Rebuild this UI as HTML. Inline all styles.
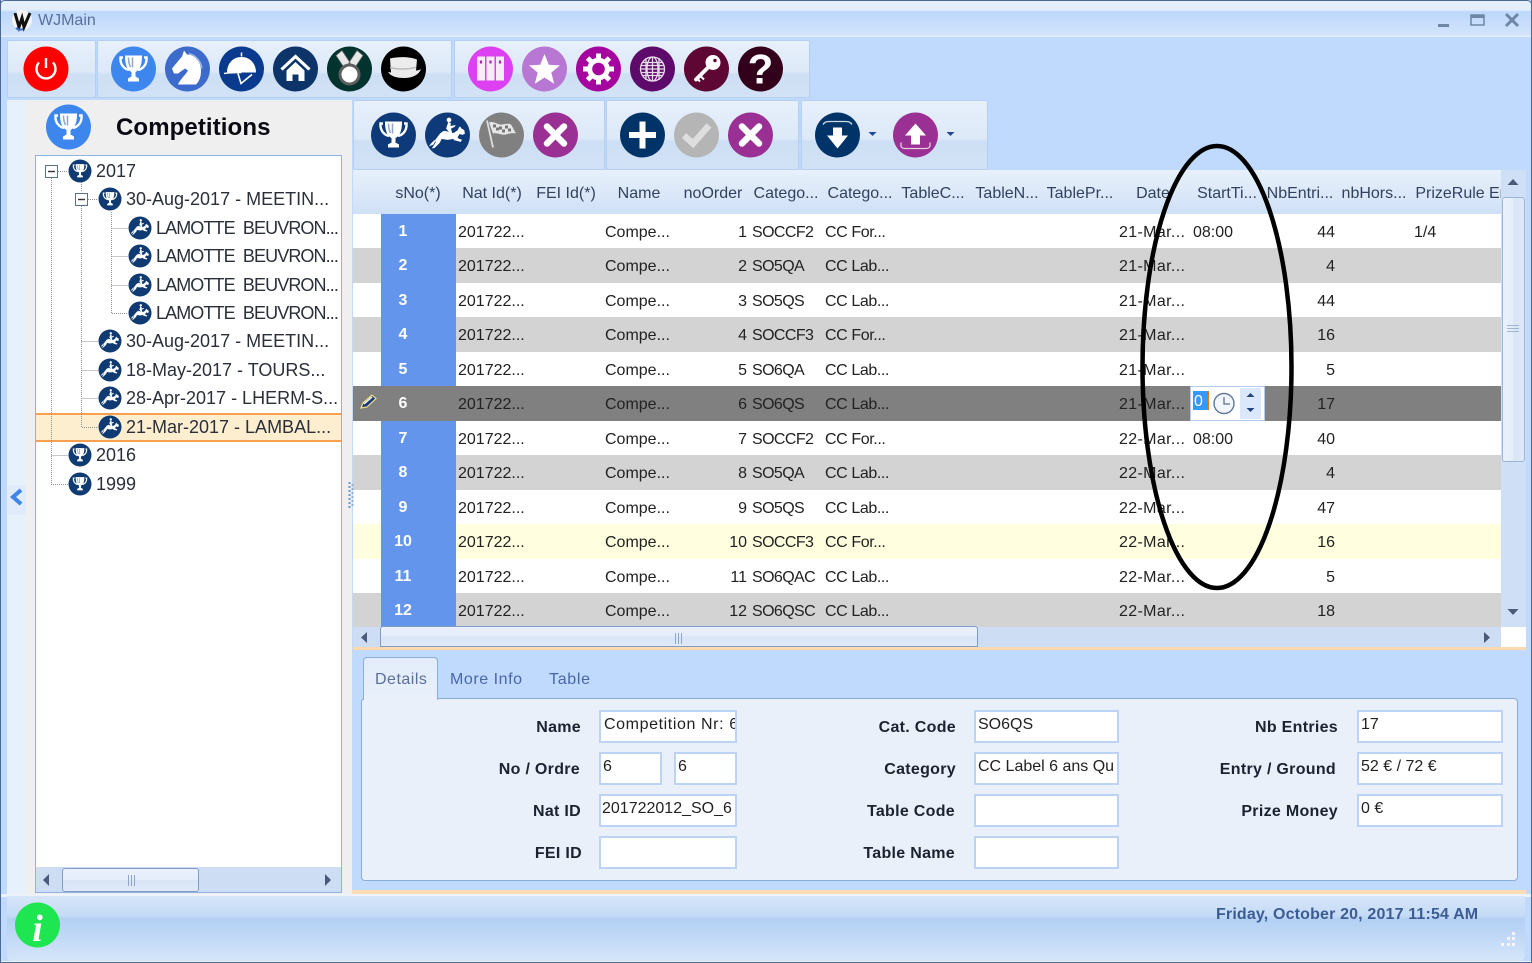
<!DOCTYPE html>
<html><head><meta charset="utf-8"><title>WJMain</title>
<style>
html,body{margin:0;padding:0;width:1532px;height:963px;overflow:hidden;background:#bfdafd}
*{box-sizing:border-box}
body{font-family:"Liberation Sans",sans-serif;color:#222;position:relative}
.a{position:absolute}
.grp{position:absolute;background:linear-gradient(#e7f0fb 0,#dde9f8 55%,#cddff4 60%,#d2e2f6 100%);border:1px solid #b4cff2;border-radius:2px}
.hd span{position:absolute;top:172px;height:44px;line-height:44px;font-size:16px;color:#33415f;text-align:center;white-space:nowrap;transform:translateX(-50%)}
.r{position:absolute;left:353px;width:1148px;font-size:16px;line-height:34px;white-space:nowrap;overflow:hidden}
.r span{position:absolute;top:2px}
.w{background:#fff}.g{background:#d3d3d3}.s{background:#808080}.y{background:#ffffe0}
.r .n{top:0;left:28px;width:75px;height:100%;background:#6495ed;color:#fff;font-weight:bold;padding-top:1px}
.r .n em{font-style:normal;display:block;width:44px;text-align:center}
.c1{left:105px}.c2{left:252px}.c3{left:344px;width:50px;text-align:right}.c4{left:399px;letter-spacing:-.6px}.c5{left:472px;letter-spacing:-.4px}.c6{left:766px;letter-spacing:.35px}.c7{left:840px}.c8{left:932px;width:50px;text-align:right}.c9{left:1061px}
.t{position:absolute;font-size:18px;line-height:28px;height:28px;white-space:pre;color:#2a2f3a}
.m{letter-spacing:-.9px}
.l{position:absolute;font-weight:bold;font-size:16px;line-height:24px;text-align:right;white-space:nowrap;color:#1b2230;width:200px;letter-spacing:.3px}
.f{position:absolute;background:#fff;border:2px solid #bcd3f4;font-size:16px;line-height:26px;padding-left:3px;height:33px;white-space:nowrap;overflow:hidden;color:#222}
.th{position:absolute;border:1px solid #7f9dc8;border-radius:3px;background:linear-gradient(#e9f1fc 0,#e4edfa 50%,#d8e5f6 51%,#dfe9f8 100%)}
</style></head>
<body>
<!-- window frame -->
<div class="a" style="left:0;top:0;width:1532px;height:963px;border:1px solid #4a6a94;border-radius:5px 5px 0 0;background:#bfdafd"></div>
<div class="a" style="left:1px;top:1px;width:1530px;height:36px;background:linear-gradient(#e6f0fc 0,#e2eefc 25%,#bdd8fc 30%,#d2e4fb 95%,#eef5fe 100%);border-radius:4px 4px 0 0"></div>
<div class="a" style="left:38px;top:11px;font-size:16px;line-height:20px;color:#5b6f9c">WJMain</div>

<!-- ribbon groups -->
<div class="grp" style="left:7px;top:40px;width:89px;height:58px"></div>
<div class="grp" style="left:97px;top:40px;width:355px;height:58px"></div>
<div class="grp" style="left:454px;top:40px;width:356px;height:58px"></div>

<!-- left panel -->
<div class="a" style="left:7px;top:100px;width:19px;height:795px;background:#e7f1fc"></div>
<div class="a" style="left:7px;top:485px;width:19px;height:30px;background:#e0ecfb"></div>
<div class="a" style="left:26px;top:100px;width:326px;height:795px;background:#efefef"></div>
<div class="a" style="left:116px;top:113px;font-size:24px;line-height:30px;font-weight:bold;color:#0a0a12;letter-spacing:.1px">Competitions</div>
<div class="a" style="left:35px;top:155px;width:307px;height:738px;background:#fff;border:1px solid #8fb2e2"></div>
<div class="a" style="left:36px;top:413px;width:305px;height:29px;background:#fdeed0;border-top:2px solid #f8a050;border-bottom:2px solid #f8a050"></div>
<div class="t" style="left:96px;top:157px">2017</div>
<div class="t" style="left:126px;top:185px">30-Aug-2017 - MEETIN...</div>
<div class="t m" style="left:156px;top:214px">LAMOTTE  BEUVRON...</div>
<div class="t m" style="left:156px;top:242px">LAMOTTE  BEUVRON...</div>
<div class="t m" style="left:156px;top:271px">LAMOTTE  BEUVRON...</div>
<div class="t m" style="left:156px;top:299px">LAMOTTE  BEUVRON...</div>
<div class="t" style="left:126px;top:327px">30-Aug-2017 - MEETIN...</div>
<div class="t" style="left:126px;top:356px">18-May-2017 - TOURS...</div>
<div class="t" style="left:126px;top:384px">28-Apr-2017 - LHERM-S...</div>
<div class="t" style="left:126px;top:413px">21-Mar-2017 - LAMBAL...</div>
<div class="t" style="left:96px;top:441px">2016</div>
<div class="t" style="left:96px;top:470px">1999</div>
<div class="a" style="left:36px;top:867px;width:305px;height:25px;background:#cddef4"></div>
<div class="th" style="left:62px;top:868px;width:137px;height:24px"></div>

<!-- right toolbars -->
<div class="grp" style="left:353px;top:100px;width:252px;height:70px"></div>
<div class="grp" style="left:606px;top:100px;width:193px;height:70px"></div>
<div class="grp" style="left:801px;top:100px;width:187px;height:70px"></div>

<!-- grid header -->
<div class="a" style="left:353px;top:170px;width:1148px;height:44px;background:linear-gradient(#e8f1fc,#cfe0f6)"></div>
<div class="hd">
<span style="left:418px">sNo(*)</span><span style="left:492px">Nat Id(*)</span><span style="left:566px">FEI Id(*)</span><span style="left:639px">Name</span><span style="left:713px">noOrder</span><span style="left:786px">Catego...</span><span style="left:860px">Catego...</span><span style="left:933px">TableC...</span><span style="left:1007px">TableN...</span><span style="left:1080px">TablePr...</span><span style="left:1153px">Date</span><span style="left:1227px">StartTi...</span><span style="left:1300px">NbEntri...</span><span style="left:1374px">nbHors...</span><span style="left:1450px">PrizeRule</span>
</div>
<div class="a" style="left:1489px;top:172px;width:12px;height:44px;overflow:hidden;font-size:16px;line-height:44px;color:#33415f">En</div>

<!-- grid rows -->
<div class="r w" style="top:214px;height:34px"><span class="n"><em>1</em></span><span class="c1">201722...</span><span class="c2">Compe...</span><span class="c3">1</span><span class="c4">SOCCF2</span><span class="c5">CC For...</span><span class="c6">21-Mar...</span><span class="c7">08:00</span><span class="c8">44</span><span class="c9">1/4</span></div>
<div class="r g" style="top:248px;height:35px"><span class="n"><em>2</em></span><span class="c1">201722...</span><span class="c2">Compe...</span><span class="c3">2</span><span class="c4">SO5QA</span><span class="c5">CC Lab...</span><span class="c6">21-Mar...</span><span class="c8">4</span></div>
<div class="r w" style="top:283px;height:34px"><span class="n"><em>3</em></span><span class="c1">201722...</span><span class="c2">Compe...</span><span class="c3">3</span><span class="c4">SO5QS</span><span class="c5">CC Lab...</span><span class="c6">21-Mar...</span><span class="c8">44</span></div>
<div class="r g" style="top:317px;height:35px"><span class="n"><em>4</em></span><span class="c1">201722...</span><span class="c2">Compe...</span><span class="c3">4</span><span class="c4">SOCCF3</span><span class="c5">CC For...</span><span class="c6">21-Mar...</span><span class="c8">16</span></div>
<div class="r w" style="top:352px;height:34px"><span class="n"><em>5</em></span><span class="c1">201722...</span><span class="c2">Compe...</span><span class="c3">5</span><span class="c4">SO6QA</span><span class="c5">CC Lab...</span><span class="c6">21-Mar...</span><span class="c8">5</span></div>
<div class="r s" style="top:386px;height:35px"><span class="n" style="background:#808080"><em>6</em></span><span class="c1">201722...</span><span class="c2">Compe...</span><span class="c3">6</span><span class="c4">SO6QS</span><span class="c5">CC Lab...</span><span class="c6">21-Mar...</span><span class="c8">17</span></div>
<div class="r w" style="top:421px;height:34px"><span class="n"><em>7</em></span><span class="c1">201722...</span><span class="c2">Compe...</span><span class="c3">7</span><span class="c4">SOCCF2</span><span class="c5">CC For...</span><span class="c6">22-Mar...</span><span class="c7">08:00</span><span class="c8">40</span></div>
<div class="r g" style="top:455px;height:35px"><span class="n"><em>8</em></span><span class="c1">201722...</span><span class="c2">Compe...</span><span class="c3">8</span><span class="c4">SO5QA</span><span class="c5">CC Lab...</span><span class="c6">22-Mar...</span><span class="c8">4</span></div>
<div class="r w" style="top:490px;height:34px"><span class="n"><em>9</em></span><span class="c1">201722...</span><span class="c2">Compe...</span><span class="c3">9</span><span class="c4">SO5QS</span><span class="c5">CC Lab...</span><span class="c6">22-Mar...</span><span class="c8">47</span></div>
<div class="r y" style="top:524px;height:35px"><span class="n"><em>10</em></span><span class="c1">201722...</span><span class="c2">Compe...</span><span class="c3">10</span><span class="c4">SOCCF3</span><span class="c5">CC For...</span><span class="c6">22-Mar...</span><span class="c8">16</span></div>
<div class="r w" style="top:559px;height:34px"><span class="n"><em>11</em></span><span class="c1">201722...</span><span class="c2">Compe...</span><span class="c3">11</span><span class="c4">SO6QAC</span><span class="c5">CC Lab...</span><span class="c6">22-Mar...</span><span class="c8">5</span></div>
<div class="r g" style="top:593px;height:34px"><span class="n"><em>12</em></span><span class="c1">201722...</span><span class="c2">Compe...</span><span class="c3">12</span><span class="c4">SO6QSC</span><span class="c5">CC Lab...</span><span class="c6">22-Mar...</span><span class="c8">18</span></div>

<!-- row 6 time editor -->
<div class="a" style="left:1190px;top:386px;width:75px;height:35px;background:#fff;border:1px solid #b0cbf0"></div>
<div class="a" style="left:1193px;top:391px;width:15px;height:19px;background:#3399ff;color:#fff;font-size:16px;line-height:21px;overflow:hidden;padding-left:1px">0</div>
<div class="a" style="left:1208px;top:391px;width:1px;height:19px;background:#e87a00"></div>
<div class="a" style="left:1240px;top:388px;width:21px;height:31px;background:#dbe8fb"></div>

<!-- vertical scrollbar -->
<div class="a" style="left:1501px;top:170px;width:25px;height:457px;background:#cfe0f6"></div>
<div class="th" style="left:1502px;top:197px;width:23px;height:265px;background:linear-gradient(90deg,#e9f1fc 0,#e4edfa 50%,#d8e5f6 51%,#dfe9f8 100%);border-color:#9db6d8"></div>
<!-- horizontal scrollbar -->
<div class="a" style="left:353px;top:627px;width:1148px;height:20px;background:#cddef4"></div>
<div class="a" style="left:1501px;top:627px;width:25px;height:20px;background:#fff"></div>
<div class="th" style="left:380px;top:626px;width:598px;height:21px;border-radius:3px 3px 0 0"></div>
<div class="a" style="left:353px;top:647px;width:1173px;height:3px;background:#fdd9b0"></div>

<!-- tabs -->
<div class="a" style="left:361px;top:698px;width:1157px;height:183px;background:#e9f0fa;border:1px solid #8aaddb;border-radius:4px"></div>
<div class="a" style="left:363px;top:657px;width:75px;height:43px;background:linear-gradient(#e2ecfa,#e9f0fa);border:1px solid #8aaddb;border-bottom:0;border-radius:4px 4px 0 0"></div>
<div class="a" style="left:375px;top:670px;font-size:16px;line-height:20px;color:#5b6f9c;letter-spacing:.5px">Details</div>
<div class="a" style="left:450px;top:670px;font-size:16px;line-height:20px;color:#4a66a8;letter-spacing:.55px">More Info</div>
<div class="a" style="left:549px;top:670px;font-size:16px;line-height:20px;color:#4a66a8;letter-spacing:.7px">Table</div>

<!-- form -->
<div class="l" style="left:381px;top:716px">Name</div>
<div class="l" style="left:380px;top:758px">No / Ordre</div>
<div class="l" style="left:381px;top:800px">Nat ID</div>
<div class="l" style="left:382px;top:842px">FEI ID</div>
<div class="l" style="left:756px;top:716px">Cat. Code</div>
<div class="l" style="left:756px;top:758px">Category</div>
<div class="l" style="left:755px;top:800px">Table Code</div>
<div class="l" style="left:755px;top:842px">Table Name</div>
<div class="l" style="left:1138px;top:716px">Nb Entries</div>
<div class="l" style="left:1136px;top:758px">Entry / Ground</div>
<div class="l" style="left:1138px;top:800px">Prize Money</div>
<div class="f" style="left:599px;top:710px;width:138px;letter-spacing:.6px">Competition Nr: 6</div>
<div class="f" style="left:599px;top:752px;width:63px;padding-left:2px">6</div>
<div class="f" style="left:674px;top:752px;width:63px;padding-left:2px">6</div>
<div class="f" style="left:599px;top:794px;width:138px;padding-left:1px">201722012_SO_6</div>
<div class="f" style="left:599px;top:836px;width:138px"></div>
<div class="f" style="left:974px;top:710px;width:145px;padding-left:2px">SO6QS</div>
<div class="f" style="left:974px;top:752px;width:145px;padding-left:2px">CC Label 6 ans Qu</div>
<div class="f" style="left:974px;top:794px;width:145px"></div>
<div class="f" style="left:974px;top:836px;width:145px"></div>
<div class="f" style="left:1357px;top:710px;width:146px;padding-left:2px">17</div>
<div class="f" style="left:1357px;top:752px;width:146px;padding-left:2px">52 € / 72 €</div>
<div class="f" style="left:1357px;top:794px;width:146px;padding-left:2px">0 €</div>

<!-- status -->
<div class="a" style="left:352px;top:890px;width:1174px;height:4px;background:#fcdcb5"></div>
<div class="a" style="left:0;top:894px;width:1532px;height:3px;background:#eef3fa"></div>
<div class="a" style="left:7px;top:896px;width:1518px;height:65px;border-radius:0 0 5px 5px;background:linear-gradient(#d6e6f9 0,#c5dbf6 30%,#b3d0f4 36%,#c2d9f6 65%,#d5e5f9 100%)"></div>
<div class="a" style="left:0;top:961px;width:1532px;height:2px;background:#eef3fa;border-bottom:1px solid #4a6a94"></div>
<div class="a" style="left:0;top:0;width:1px;height:963px;background:#4a6a94"></div>
<div class="a" style="left:1531px;top:0;width:1px;height:963px;background:#4a6a94"></div>
<div class="a" style="left:1216px;top:905px;font-size:16px;line-height:20px;font-weight:bold;color:#3c5c94;white-space:nowrap;letter-spacing:.16px">Friday, October 20, 2017 11:54 AM</div>

<!-- icons overlay -->
<svg class="a" style="left:0;top:0" width="1532" height="963" viewBox="0 0 1532 963" xmlns="http://www.w3.org/2000/svg">
<defs>
<g id="trophy">
<path d="M12 11H9.500C9 17 12 22 18 23.500M33 11h2.500C36 17 33 22 27 23.500" fill="none" stroke="#fff" stroke-width="2.400"/>
<path d="M14 9h17c0 8-1.500 14-6.500 16.500V30l3.500 2v3H17v-3l3.500-2v-4.500C15.500 23 14 17 14 9z" fill="#fff"/>
<path d="M17.500 11c0 4 .7 7 2 9.500M21.500 11v10" fill="none" stroke="#8fa6c6" stroke-width="1.500"/>
</g>
<g id="horse">
<path d="M7 22L17 10l2-6 3 4c8 0 14 7 14 16 0 7-2 11-5 14H13c2-5 7-9 10-14l-3-2-7 5H9z" fill="#fff"/>
<path d="M24 7c7 2 12 8 13 15" fill="none" stroke="#9bb6e6" stroke-width="1.500"/>
</g>
<g id="helmet">
<path d="M22.500 6v4" stroke="#fff" stroke-width="1.500"/>
<path d="M8 26c0-9 6-15.500 14.500-15.500S37 17 37 26z" fill="#fff"/>
<path d="M5 27c6-1 12-1 17.500-1M19 27l3 10 11-9" fill="none" stroke="#fff" stroke-width="1.600"/>
</g>
<g id="house">
<path d="M8.500 23L22.500 10l14 13" fill="none" stroke="#fff" stroke-width="3.200"/>
<path d="M13.500 24l9-8.500 9 8.500v10.500h-6V28h-6v6.500h-6z" fill="#fff"/>
</g>
<g id="medal">
<path d="M9 9l6-5 8 12-6 5zM36 9l-6-5-8 12 6 5z" fill="#e8e8e8" stroke="#666" stroke-width=".8"/>
<circle cx="22.500" cy="28" r="9.500" fill="#fff" stroke="#5f5f5f" stroke-width="3"/>
</g>
<g id="hat">
<path d="M9 12c8-2 20-2 27 1l-1 11c2 0 4-.5 5-1.500-2 6-9 9-17 9-7 0-13-1.500-16-6l3 .5z" fill="#ececec"/>
<path d="M9 21c7 2 17 2 26 0" fill="none" stroke="#bdbdbd" stroke-width="1.500"/>
</g>
<g id="books">
<path d="M9 10h8v24H9zM18.500 10h8v24h-8zM28 10h8v24h-8z" fill="#f6ecf6"/>
<path d="M13 14v3M22.500 14v3M32 14v3" stroke="#a030a8" stroke-width="2.200"/>
</g>
<g id="star"><path d="M22.500 7.500l4.300 10.700 11.200.7-8.700 7.200 2.900 11.100-9.700-6.200-9.700 6.200 2.900-11.100-8.700-7.200 11.200-.7z" fill="#fff"/></g>
<g id="gear">
<circle cx="22.500" cy="22.500" r="8.800" fill="none" stroke="#fff" stroke-width="5"/>
<path d="M22.500 22.500V7M22.500 22.500V38M22.500 22.500H7M22.500 22.500H38M22.500 22.500L11.500 11.500M22.500 22.500L33.500 33.500M22.500 22.500L33.500 11.500M22.500 22.500L11.500 33.500" stroke="#fff" stroke-width="5" stroke-dasharray="0 9 6.500 20"/>
</g>
<g id="globe" fill="none" stroke="#e6dbe8" stroke-width="1.300">
<circle cx="22.500" cy="22.500" r="12"/><ellipse cx="22.500" cy="22.500" rx="5.500" ry="12"/><path d="M22.500 10.500v24M10.500 22.500h24M12 16h21M12 29h21M10.800 19h23.400M10.800 26h23.400M16 11.500v22M29 11.500v22"/>
</g>
<g id="key">
<path d="M25 20L12 33" stroke="#fff" stroke-width="3.800" stroke-linecap="round"/>
<path d="M17 30l3 3M14 33l2 2" stroke="#fff" stroke-width="2"/>
<circle cx="29" cy="16" r="7.500" fill="#fff"/>
<circle cx="31" cy="14" r="1.700" fill="#5e0634"/>
</g>
<g id="rider" stroke="#fff" stroke-width=".7">
<path d="M5 33l3-1 3-5 3-4c2-3 5-5 7-4l7 2c2-.5 3-2 5-3 1-2 1-3 2-3.500l1 1.500 3 2 .5 3-2 1-3-1-2 3v2l4 1.500-1 1.500-6-1.500-1-1.500-6 1-6-1-2 4-5 5-2 .5 2-3 2-3.500-2-1-3 3z" fill="#fff"/>
<circle cx="24" cy="7.500" r="2" fill="#fff"/>
<path d="M23.500 10l-2 6 3 3.500 1 2 1.500-.5-1.500-5 4-2 .5-1-5 1 .5-3z" fill="#fff"/>
</g>
<g id="flag">
<path d="M8 8l6 27" stroke="#ddd" stroke-width="1.800"/>
<path d="M10 10c5-2 9 3 13 2 4-.5 7-1 9 0 2 3 3 6 5 9-3-1-7 0-10 1-4 1-8-2-13-1z" fill="#e6e6e6"/>
<path d="M14 12h3v3h-3zM20 14h3v3h-3zM26 13h3v3h-3zM17 15h3v3h-3zM23 17h3v3h-3zM29 16h3v3h-3z" fill="#777"/>
</g>
<g id="x"><path d="M14 14l17 17M31 14L14 31" stroke="#fff" stroke-width="6.500" stroke-linecap="round"/></g>
<g id="plus"><path d="M22.500 9v27M9 22.500h27" stroke="#fff" stroke-width="6"/></g>
<g id="check"><path d="M10 23l9 8L35 13" fill="none" stroke="#dedede" stroke-width="6.500"/></g>
<g id="down">
<path d="M8 12c2-3 4-3 7-3h15c3 0 5 0 7 3" fill="none" stroke="#d0dae6" stroke-width="1.300"/>
<path d="M18 15h9v8h6L22.500 36 12 23h6z" fill="#fff"/>
</g>
<g id="up">
<path d="M18 32v-9h-6L22.500 11 33 23h-6v9z" fill="#fff"/>
<path d="M8 30v3c0 2 2 3 4 3h21c2 0 4-1 4-3v-3" fill="none" stroke="#e5cfe5" stroke-width="1.300"/>
</g>
<g id="sm"><circle cx="22.500" cy="22.500" r="22.500" fill="#0f3a72"/><use href="#rider"/></g>
<g id="st"><circle cx="22.500" cy="22.500" r="22.500" fill="#0f3a72"/><use href="#trophy"/></g>
</defs>

<!-- title icon + window buttons -->
<circle cx="22" cy="20" r="10" fill="#f4f4f4"/>
<path d="M15 13l4 14 3-9 2 9 6-14" fill="none" stroke="#111" stroke-width="3"/>
<path d="M16 28c2 2 5 2 7 1" fill="none" stroke="#3a6fc4" stroke-width="2"/>
<rect x="1438" y="24" width="11" height="3" fill="#6f86a6"/>
<rect x="1471" y="15" width="13" height="10" fill="none" stroke="#6f86a6" stroke-width="1.500"/><rect x="1471" y="15" width="13" height="3" fill="#6f86a6"/>
<path d="M1506 14l12 12M1518 14l-12 12" stroke="#6f86a6" stroke-width="3"/>

<!-- ribbon icons -->
<circle cx="46" cy="69" r="22.500" fill="#f00"/>
<path d="M39 62.500a9.500 9.500 0 1 0 14 0" fill="none" stroke="#fff" stroke-width="2.400"/><path d="M46 58v10" stroke="#fff" stroke-width="2.400"/>
<g transform="translate(111,46.500)"><circle cx="22.500" cy="22.500" r="22.500" fill="#3d86ee"/><use href="#trophy"/></g>
<g transform="translate(165,46.500)"><circle cx="22.500" cy="22.500" r="22.500" fill="#3c6bcb"/><use href="#horse"/></g>
<g transform="translate(219,46.500)"><circle cx="22.500" cy="22.500" r="22.500" fill="#0a3a8e"/><use href="#helmet"/></g>
<g transform="translate(273,46.500)"><circle cx="22.500" cy="22.500" r="22.500" fill="#0c3468"/><use href="#house"/></g>
<g transform="translate(327,46.500)"><circle cx="22.500" cy="22.500" r="22.500" fill="#03332f"/><use href="#medal"/></g>
<g transform="translate(381,46.500)"><circle cx="22.500" cy="22.500" r="22.500" fill="#000"/><use href="#hat"/></g>
<g transform="translate(468,46.500)"><circle cx="22.500" cy="22.500" r="22.500" fill="#dd40f0"/><use href="#books"/></g>
<g transform="translate(522,46.500)"><circle cx="22.500" cy="22.500" r="22.500" fill="#b877d2"/><use href="#star"/></g>
<g transform="translate(576,46.500)"><circle cx="22.500" cy="22.500" r="22.500" fill="#a5049e"/><use href="#gear"/></g>
<g transform="translate(630,46.500)"><circle cx="22.500" cy="22.500" r="22.500" fill="#5e0a6a"/><use href="#globe"/></g>
<g transform="translate(684,46.500)"><circle cx="22.500" cy="22.500" r="22.500" fill="#5e0634"/><use href="#key"/></g>
<g transform="translate(738,46.500)"><circle cx="22.500" cy="22.500" r="22.500" fill="#33001c"/>
<text x="22.500" y="37" text-anchor="middle" font-family="Liberation Sans" font-weight="bold" font-size="42" fill="#fff">?</text></g>

<!-- panel icon -->
<g transform="translate(46,104.500)"><circle cx="22.500" cy="22.500" r="22.500" fill="#3d86ee"/><use href="#trophy"/></g>

<!-- toolbar 2 icons -->
<g transform="translate(371,112.500)"><circle cx="22.500" cy="22.500" r="22.500" fill="#0f3a7a"/><use href="#trophy"/></g>
<g transform="translate(425,112.500)"><circle cx="22.500" cy="22.500" r="22.500" fill="#0f3a7a"/><use href="#rider"/></g>
<g transform="translate(479,112.500)"><circle cx="22.500" cy="22.500" r="22.500" fill="#808080"/><use href="#flag"/></g>
<g transform="translate(533,112.500)"><circle cx="22.500" cy="22.500" r="22.500" fill="#9a2f94"/><use href="#x"/></g>
<g transform="translate(620,112.500)"><circle cx="22.500" cy="22.500" r="22.500" fill="#003468"/><use href="#plus"/></g>
<g transform="translate(674,112.500)"><circle cx="22.500" cy="22.500" r="22.500" fill="#b5b5b5"/><use href="#check"/></g>
<g transform="translate(728,112.500)"><circle cx="22.500" cy="22.500" r="22.500" fill="#9a2f94"/><use href="#x"/></g>
<g transform="translate(815,112.500)"><circle cx="22.500" cy="22.500" r="22.500" fill="#003468"/><use href="#down"/></g>
<g transform="translate(893,112.500)"><circle cx="22.500" cy="22.500" r="22.500" fill="#9a2f94"/><use href="#up"/></g>
<path d="M868.500 132h8l-4 4zM946.500 132h8l-4 4z" fill="#1f4a9c"/>

<!-- tree lines -->
<g fill="none" stroke="#8a8f99" stroke-width="1" stroke-dasharray="1 1">
<path d="M51.500 178V484.500H68M81.500 206V427.500H98M111.500 212V313.500H128M111.500 228.500H128M111.500 256.500H128M111.500 285.500H128M81.500 341.500H98M81.500 370.500H98M81.500 398.500H98M58 171.500H68M88 199.500H98M51.500 455.500H68M81.500 182V192"/>
</g>
<rect x="45.500" y="165.500" width="12" height="12" fill="#fff" stroke="#5d7089"/><path d="M48 171.500h7" stroke="#333" stroke-width="1.400"/>
<rect x="75.500" y="193.500" width="12" height="12" fill="#fff" stroke="#5d7089"/><path d="M78 199.500h7" stroke="#333" stroke-width="1.400"/>
<!-- tree icons -->
<g transform="translate(68.500,159.500) scale(.511)"><use href="#st"/></g>
<g transform="translate(98.500,187.500) scale(.511)"><use href="#st"/></g>
<g transform="translate(128.500,216.500) scale(.511)"><use href="#sm"/></g>
<g transform="translate(128.500,244.500) scale(.511)"><use href="#sm"/></g>
<g transform="translate(128.500,273.500) scale(.511)"><use href="#sm"/></g>
<g transform="translate(128.500,301.500) scale(.511)"><use href="#sm"/></g>
<g transform="translate(98.500,329.500) scale(.511)"><use href="#sm"/></g>
<g transform="translate(98.500,358.500) scale(.511)"><use href="#sm"/></g>
<g transform="translate(98.500,386.500) scale(.511)"><use href="#sm"/></g>
<g transform="translate(98.500,415.500) scale(.511)"><use href="#sm"/></g>
<g transform="translate(68.500,443.500) scale(.511)"><use href="#st"/></g>
<g transform="translate(68.500,472.500) scale(.511)"><use href="#st"/></g>

<!-- collapse chevron, splitter dots -->
<path d="M21 490l-8 7 8 7" fill="none" stroke="#3d85e8" stroke-width="4"/>
<path d="M349.500 482v28" stroke="#6f95cc" stroke-width="2" stroke-dasharray="2 2"/>
<path d="M352.500 484v24" stroke="#8fb0dc" stroke-width="2" stroke-dasharray="2 2"/>

<!-- scrollbar arrows -->
<path d="M49 874v12l-6-6zM325 874v12l6-6z" fill="#4a5a78"/>
<path d="M128.500 875v11M131.500 875v11M134.500 875v11" stroke="#8ea6c8" stroke-width="1"/>
<path d="M1513 179l5.500 6h-11zM1507.500 609h11l-5.500 6z" fill="#4a5a78"/>
<path d="M1507 325.500h12M1507 328.500h12M1507 331.500h12" stroke="#9fb5d5" stroke-width="1"/>
<path d="M367 632v11l-6-5.500zM1484 632v11l6-5.500z" fill="#4a5a78"/>
<path d="M675.500 633v11M678.500 633v11M681.500 633v11" stroke="#8ea6c8" stroke-width="1"/>

<!-- pencil -->
<path d="M361 408l2-5 9-8 4 3.500-9 8.500z" fill="#1a3a80" stroke="#f0e080" stroke-width="1.200"/>
<path d="M364 404l8-7" stroke="#fff" stroke-width="1.400"/>

<!-- time editor icons -->
<circle cx="1224" cy="403.500" r="10" fill="#f3f7fd" stroke="#63799c" stroke-width="1.400"/>
<path d="M1224 397v7h6" fill="none" stroke="#5a6f90" stroke-width="1.300"/>
<path d="M1250.500 393l4 4h-8zM1246.500 408h8l-4 4z" fill="#24467e"/>

<!-- info -->
<circle cx="37.500" cy="925" r="22.500" fill="#1ee650"/>
<text x="37.500" y="941" text-anchor="middle" font-family="Liberation Serif" font-weight="bold" font-style="italic" font-size="38" fill="#fff">i</text>

<!-- grip -->
<g fill="#f4f8fd"><rect x="1512" y="932" width="3" height="3"/><rect x="1507" y="937" width="3" height="3"/><rect x="1512" y="937" width="3" height="3"/><rect x="1501" y="943" width="3" height="3"/><rect x="1507" y="943" width="3" height="3"/><rect x="1512" y="943" width="3" height="3"/></g>

<!-- hand-drawn ellipse -->
<ellipse cx="1217" cy="367" rx="74.500" ry="221" fill="none" stroke="#000" stroke-width="4.500"/>
</svg>
</body></html>
